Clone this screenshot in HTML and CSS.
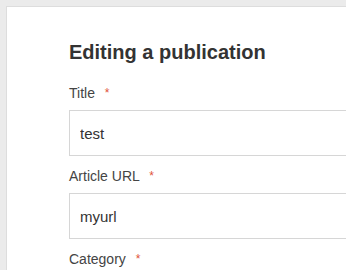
FILE: index.html
```html
<!DOCTYPE html>
<html>
<head>
    <link rel="stylesheet" href="styles.css">
</head>
<body>
    <div class="page">
        <div class="card">
            <h1 class="title">Editing a publication</h1>
            <form class="form">
                <div class="field">
                    <label>Title <span class="req">*</span></label>
                    <input type="text" value="test">
                </div>
                <div class="field">
                    <label>Article URL <span class="req">*</span></label>
                    <input type="text" value="myurl">
                </div>
                <div class="field">
                    <label>Category <span class="req">*</span></label>
                </div>
            </form>
        </div>
    </div>
</body>
</html>
```

FILE: styles.css
```css
* {
    box-sizing: border-box;
    margin: 0;
    padding: 0;
}

html, body {
    height: 100%;
    overflow: hidden;
}

body {
    background-color: #ebebeb;
    color: #333333;
    font-family: "Liberation Sans", Arial, sans-serif;
}

.page {
    padding: 6px 0 0 6px;
}

.card {
    width: 600px;
    height: 300px;
    background-color: #ffffff;
    border: 1px solid #dddddd;
    padding: 33px 0 0 62px;
}

.title {
    font-size: 20px;
    font-weight: bold;
    line-height: 24px;
    color: #333333;
    margin-bottom: 21px;
}

.field {
    display: flex;
    flex-direction: column;
    gap: 9px;
    margin-bottom: 12px;
}

label {
    font-size: 14px;
    line-height: 16px;
    color: #444444;
}

.req {
    color: #e0533a;
    font-size: 12px;
    vertical-align: top;
    margin-left: 6px;
}

input {
    height: 46px;
    padding: 0 10px;
    font-size: 15px;
    font-family: inherit;
    color: #333333;
    border: 1px solid #d6d6d6;
    border-radius: 0;
    background-color: #ffffff;
}
```
